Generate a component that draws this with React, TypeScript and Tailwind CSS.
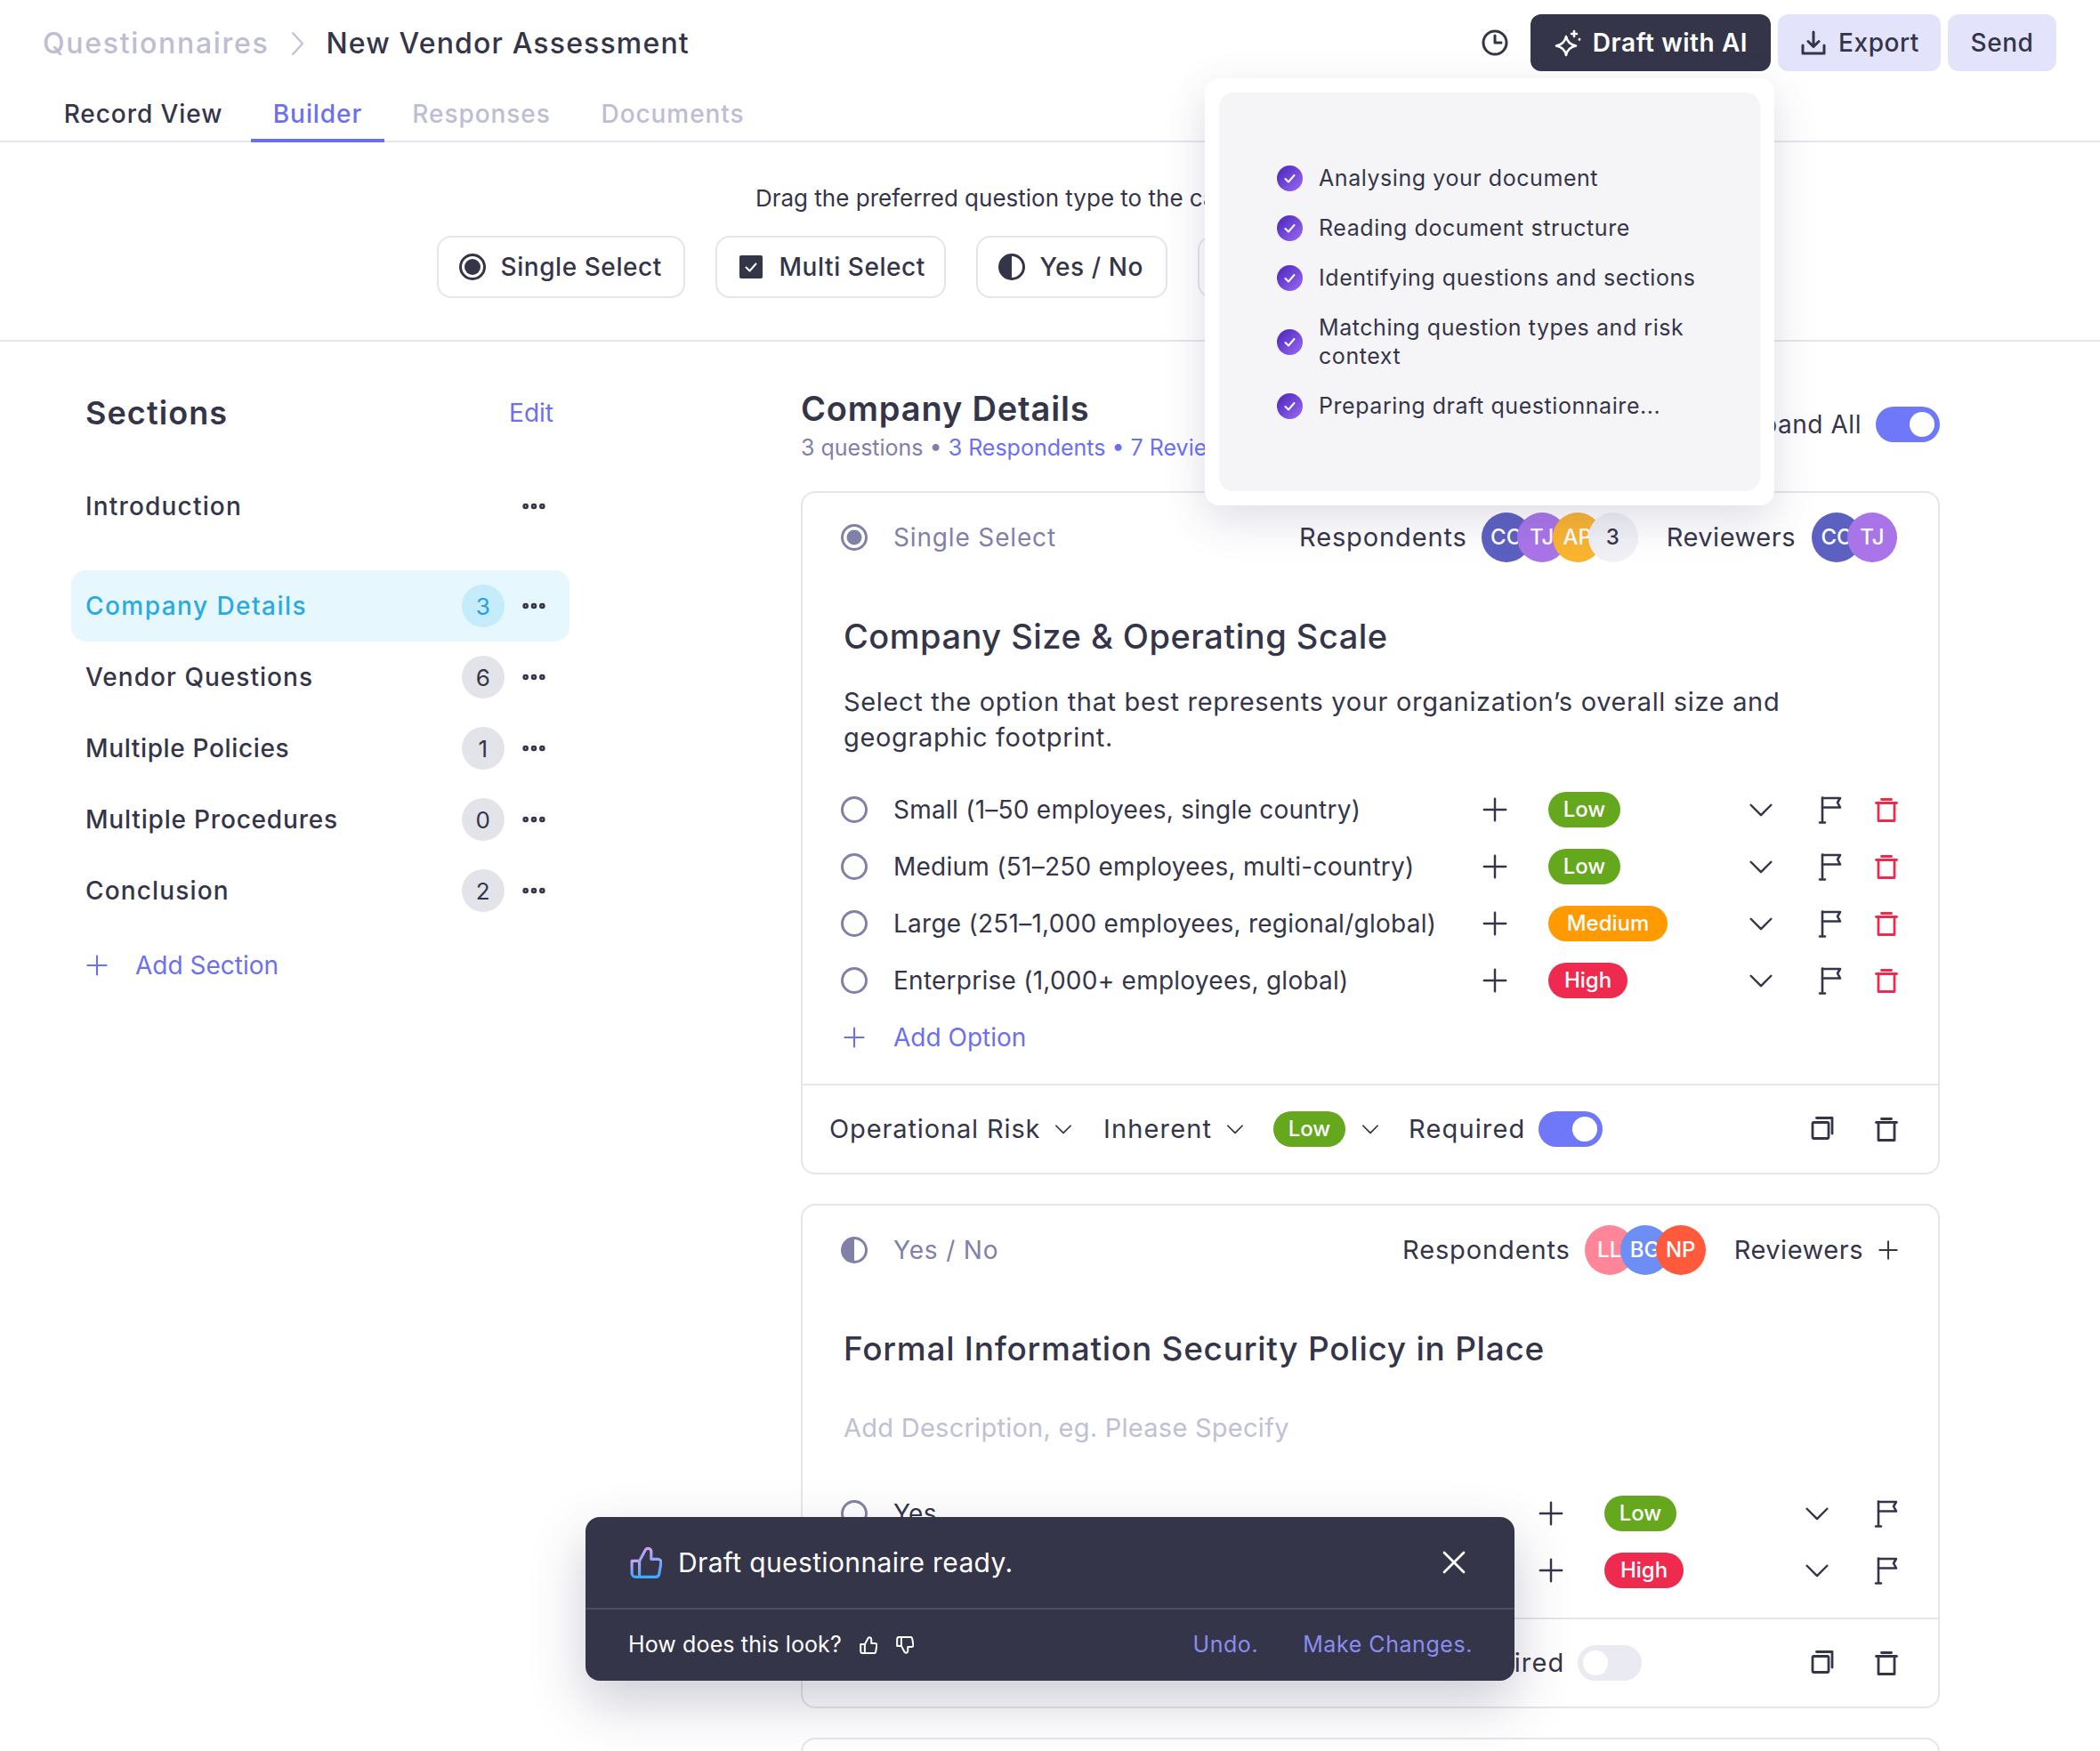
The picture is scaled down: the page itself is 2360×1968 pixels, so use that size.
import { MoreHorizontal } from 'lucide-react';

const ClockIcon = () => (
    <svg width="32" height="32" viewBox="0 0 32 32" fill="none" stroke="#35354a" strokeWidth="3" strokeLinecap="round" strokeLinejoin="round">
        <circle cx="16" cy="16" r="13" />
        <path d="M16 8v8h7" />
    </svg>
);

const SparkleIcon = () => (
    <svg width="32" height="32" viewBox="0 0 32 32" fill="none" stroke="white" strokeWidth="2.6" strokeLinecap="round" strokeLinejoin="round">
        <path d="M14 9c1 5.500 4 9 11 10.500c-7 1.500-10 5-11 10.500c-1-5.500-4-9-11-10.500c7-1.500 10-5 11-10.500z" />
        <path d="M23 3v6M20 6h6" />
        <path d="M29 12v.5" />
    </svg>
);

const DownloadIcon = () => (
    <svg width="32" height="32" viewBox="0 0 32 32" fill="none" stroke="#35354a" strokeWidth="3" strokeLinecap="round" strokeLinejoin="round">
        <path d="M4 19v9h24v-9" />
        <path d="M16 4v16M10 14.500l6 6 6-6" />
    </svg>
);

const FlagIcon = () => (
    <svg width="32" height="32" viewBox="0 0 32 32" fill="none" stroke="#35354a" strokeWidth="2.600" strokeLinecap="round" strokeLinejoin="round">
        <path d="M8 2.500V30M5 30.500h6" />
        <path d="M8 3h20l-3 5 3 5.500H8" />
    </svg>
);

const TrashIcon = ({ color = '#35354a' }: { color?: string }) => (
    <svg width="32" height="32" viewBox="0 0 32 32" fill="none" stroke={color} strokeWidth="2.800" strokeLinecap="round" strokeLinejoin="round">
        <path d="M11.500 4.500h11" />
        <path d="M5.500 8.500h23" />
        <path d="M8 8.500V28.500h18V8.500" />
    </svg>
);

const CopyIcon = () => (
    <svg width="32" height="32" viewBox="0 0 32 32" fill="none" stroke="#35354a" strokeWidth="2.800" strokeLinecap="round" strokeLinejoin="round">
        <rect x="6" y="8.500" width="18" height="18" rx="1.500" />
        <path d="M10.500 3.500H28V21" />
    </svg>
);

const PlusIcon = ({ size = 30, color = '#35354a', className = '' }: { size?: number; color?: string; className?: string }) => (
    <svg width={size} height={size} viewBox="0 0 32 32" fill="none" stroke={color} strokeWidth="2.6" strokeLinecap="round" className={`shrink-0 ${className}`}>
        <path d="M16 3v26M3 16h26" />
    </svg>
);

const CloseIcon = () => (
    <svg width="32" height="32" viewBox="0 0 32 32" fill="none" stroke="white" strokeWidth="2.8" strokeLinecap="round" className="shrink-0">
        <path d="M5 5l22 22M27 5L5 27" />
    </svg>
);

const Chevron = ({ size = 28, className = '' }: { size?: number; className?: string }) => (
    <svg width={size} height={size} viewBox="0 0 32 32" fill="none" stroke="#35354a" strokeWidth="2.8" strokeLinecap="round" strokeLinejoin="round" className={`shrink-0 ${className}`}>
        <path d="M3 10l13 13 13-13" />
    </svg>
);

const ThumbIcon = ({ size, stroke, width = 3, className = '' }: { size: number; stroke: string; width?: number; className?: string }) => (
    <svg width={size} height={size} viewBox="0 0 34 34" fill="none" stroke={stroke} strokeWidth={width} strokeLinecap="round" strokeLinejoin="round" className={className}>
        <defs>
            <linearGradient id="thumbGrad" x1="0" y1="0" x2="0" y2="1">
                <stop offset="0" stopColor="#c9a4f0" />
                <stop offset="1" stopColor="#3fa8ff" />
            </linearGradient>
        </defs>
        <path d="M2 15.500h8v17H6a4 4 0 0 1-4-4z" />
        <path d="M10 15.500 16.500 3.500a3.400 3.400 0 0 1 6 2v8h7a3.400 3.400 0 0 1 3.400 4L31 29a4 4 0 0 1-4 3.500H10" />
    </svg>
);

const RadioOutline = () => <span className="block w-[30px] h-[30px] shrink-0 rounded-full border-[3px] border-[#8180a8]" />;

const CheckBadge = () => (
    <svg width="29" height="29" viewBox="0 0 29 29" className="shrink-0">
        <defs>
            <linearGradient id="checkGrad" x1="0" y1="0" x2="1" y2="1">
                <stop offset="0" stopColor="#4a22b8" />
                <stop offset="1" stopColor="#9a6cf5" />
            </linearGradient>
        </defs>
        <circle cx="14.500" cy="14.500" r="14.500" fill="url(#checkGrad)" />
        <path d="M9.500 15l3.500 3.500 6.500-7.500" fill="none" stroke="white" strokeWidth="2" strokeLinecap="round" strokeLinejoin="round" />
    </svg>
);

const Toggle = ({ on = true }: { on?: boolean }) => (
    <span className={on ? 'flex w-[72px] h-10 rounded-full bg-[#7078fa] items-center justify-end p-1.5 shrink-0' : 'flex w-[72px] h-10 rounded-full bg-[#eaeaf3] items-center justify-start p-1.5 shrink-0'}>
        <span className="block w-7 h-7 rounded-full bg-white" />
    </span>
);

const Pill = ({ level, className = '' }: { level: string; className?: string }) => {
    const tone: Record<string, string> = {
        Low: 'bg-[#65a81e] w-[81px]',
        Medium: 'bg-[#ff9a00] w-[134px]',
        High: 'bg-[#ee2b4e] w-[89px]',
    };
    return (
        <span className={`flex h-10 items-center justify-center rounded-full text-white text-[24px] font-medium tracking-normal ${tone[level]} ${className}`}>
            {level}
        </span>
    );
};

const Avatar = ({ label, color, first }: { label: string; color: string; first?: boolean }) => (
    <span className={first ? 'flex w-14 h-14 items-center justify-center rounded-full text-white text-[24px] font-medium tracking-normal' : 'flex w-14 h-14 -ml-4 items-center justify-center rounded-full text-white text-[24px] font-medium tracking-normal'} style={{ backgroundColor: color }}>
        {label}
    </span>
);

const TypeChip = ({ w, icon, label }: { w: string; icon: React.ReactNode; label: string }) => (
    <div className={`flex h-[70px] items-center gap-[17px] rounded-2xl border-2 border-[#e5e5ec] pl-[23px] text-[28px] font-medium text-[#35354a] ${w}`}>
        {icon}
        {label}
    </div>
);

const SectionRow = ({ name, count, track, active }: { name: string; count: number; track: string; active?: boolean }) => (
    <div className={active ? 'flex h-20 items-center rounded-2xl bg-[#e6f7fe] pl-4 pr-6 text-[#29abe2]' : 'flex h-20 items-center pl-4 pr-6 text-[#35354a]'}>
        <span className={`flex-1 text-[28px] font-medium ${track}`}>{name}</span>
        <span className={active ? 'flex w-12 h-12 items-center justify-center rounded-full bg-[#c5ecfb] text-[#2a9ee0] text-[26px]' : 'flex w-12 h-12 items-center justify-center rounded-full bg-[#e3e3ea] text-[26px]'}>{count}</span>
        <MoreHorizontal className="ml-[17px] text-[#35354a]" size={32} strokeWidth={3} />
    </div>
);

const OptionRow = ({ text, level, trash = true }: { text: string; level: string; trash?: boolean }) => (
    <div className="flex h-16 items-center pl-[43px] pr-[43px] text-[#35354a]">
        <RadioOutline />
        <span className="ml-[29px] flex-1 text-[28px] tracking-[0.009em]">{text}</span>
        <PlusIcon className="mx-px" />
        <div className="ml-11 w-[223px] shrink-0">
            <Pill level={level} />
        </div>
        <Chevron className="mx-0.5" />
        <div className="ml-[45px] shrink-0"><FlagIcon /></div>
        {trash && <div className="ml-[31px] shrink-0"><TrashIcon color="#ee2b4e" /></div>}
    </div>
);

const CardFooter = ({ level, required, labelW, pad = '' }: { level: string; required: boolean; labelW: string; pad?: string }) => (
    <div className={`flex h-[100px] items-center border-t-2 border-[#e5e5ec] pl-[30px] pr-[43px] text-[29px] tracking-[0.04em] text-[#35354a] ${pad}`}>
        <span className={`whitespace-nowrap tracking-[0.03em] ${labelW}`}>Operational Risk</span>
        <Chevron className="ml-[19px]" size={20} />
        <span className="ml-[35px] w-[119px]">Inherent</span>
        <Chevron className="ml-[19px]" size={20} />
        <Pill level={level} className="ml-[33px]" />
        <Chevron className="ml-[18px]" size={20} />
        <span className="ml-[33px] w-[129px]">Required</span>
        <div className="ml-[17px]"><Toggle on={required} /></div>
        <div className="ml-auto"><CopyIcon /></div>
        <div className="ml-10"><TrashIcon /></div>
    </div>
);

const sections = [
    { name: 'Company Details', count: 3, active: true, track: 'tracking-[0.052em]' },
    { name: 'Vendor Questions', count: 6, track: 'tracking-[0.037em]' },
    { name: 'Multiple Policies', count: 1, track: 'tracking-[0.023em]' },
    { name: 'Multiple Procedures', count: 0, track: 'tracking-[0.029em]' },
    { name: 'Conclusion', count: 2, track: 'tracking-[0.041em]' },
];

const steps = [
    'Analysing your document',
    'Reading document structure',
    'Identifying questions and sections',
    'Matching question types and risk context',
    'Preparing draft questionnaire...',
];

export default function App() {
    return (
        <div className="relative h-[1968px] w-[2360px] overflow-hidden bg-white [font-family:Inter,sans-serif] tracking-[0.035em] text-[#35354a]">
            {/* Top bar */}
            <div className="pt-4">
                <div className="flex h-16 items-center justify-between pl-12 pr-[49px]">
                    <div className="flex items-center pt-px text-[32px] font-medium">
                        <span className="tracking-[0.053em] text-[#bdbdd3]">Questionnaires</span>
                        <svg width="32" height="32" viewBox="0 0 32 32" fill="none" stroke="#bdbdd3" strokeWidth="2" strokeLinecap="round" strokeLinejoin="round" className="ml-4">
                            <path d="M11 4l11 12-11 12" />
                        </svg>
                        <span className="ml-[16px] tracking-[0.036em]">New Vendor Assessment</span>
                    </div>
                    <div className="flex items-center">
                        <ClockIcon />
                        <button className="ml-6 flex h-16 w-[270px] items-center justify-center gap-3 rounded-xl bg-[#35354a] text-[28px] font-semibold text-white">
                            <SparkleIcon />
                            Draft with AI
                        </button>
                        <button className="ml-2 flex h-16 w-[183px] items-center justify-center gap-3 rounded-xl bg-[#e3e4fb] text-[28px] font-medium">
                            <DownloadIcon />
                            Export
                        </button>
                        <button className="ml-2 flex h-16 w-[122px] items-center justify-center rounded-xl bg-[#e3e4fb] text-[28px] font-medium">Send</button>
                    </div>
                </div>
            </div>

            {/* Tabs */}
            <div className="mt-4 flex h-16 gap-2 border-b-2 border-[#e5e5ec] pl-12 text-[28px] font-medium tracking-[0.033em]">
                <div className="flex h-16 w-[226px] items-center justify-center border-b-4 border-transparent pt-1">Record View</div>
                <div className="flex h-16 w-[150px] items-center justify-center border-b-4 border-[#6c70f0] pt-1 text-[#6c70f0]">Builder</div>
                <div className="flex h-16 w-[202px] items-center justify-center border-b-4 border-transparent pt-1 text-[#bdbdd3]">Responses</div>
                <div className="flex h-16 w-[212px] items-center justify-center border-b-4 border-transparent pt-1 text-[#bdbdd3]">Documents</div>
            </div>

            {/* Question types */}
            <div className="flex h-[224px] flex-col items-center border-b-2 border-[#e5e5ec] pt-[47px]">
                <p className="text-[26px] leading-8 tracking-normal">Drag the preferred question type to the canvas below.</p>
                <div className="mt-[26px] flex gap-[34px]">
                    <TypeChip
                        w="w-[279px]"
                        label="Single Select"
                        icon={
                            <span className="flex h-[30px] w-[30px] items-center justify-center rounded-full border-[3px] border-[#35354a]">
                                <span className="block h-[18px] w-[18px] rounded-full bg-[#35354a]" />
                            </span>
                        }
                    />
                    <TypeChip
                        w="w-[259px]"
                        label="Multi Select"
                        icon={
                            <svg width="30" height="30" viewBox="0 0 30 30">
                                <rect x="2" y="2" width="26" height="26" rx="2" fill="#35354a" />
                                <path d="M9.500 15.500l4 4 7-8" fill="none" stroke="white" strokeWidth="2" strokeLinecap="round" strokeLinejoin="round" />
                            </svg>
                        }
                    />
                    <TypeChip
                        w="w-[215px]"
                        label="Yes / No"
                        icon={
                            <svg width="30" height="30" viewBox="0 0 30 30">
                                <circle cx="15" cy="15" r="13.500" fill="white" stroke="#35354a" strokeWidth="3" />
                                <path d="M15 1.500a13.500 13.500 0 0 0 0 27z" fill="#35354a" />
                            </svg>
                        }
                    />
                    <TypeChip w="w-[245px]" label="Short Text" icon={null} />
                    <TypeChip w="w-[245px]" label="Long Text" icon={null} />
                </div>
            </div>

            <div className="flex">
                {/* Sections */}
                <aside className="ml-20 w-[560px] shrink-0 pt-[60px]">
                    <div className="flex h-10 items-center justify-between pl-4 pr-[18px]">
                        <h2 className="text-[36px] font-semibold tracking-[0.03em]">Sections</h2>
                        <span className="text-[28px] tracking-normal text-[#6c70f0]">Edit</span>
                    </div>
                    <div className="mt-[45px] flex h-20 items-center justify-between pl-4 pr-6">
                        <span className="text-[28px] font-medium tracking-[0.042em]">Introduction</span>
                        <MoreHorizontal size={32} strokeWidth={3} />
                    </div>
                    <div className="mt-8">
                        {sections.map((s) => (
                            <SectionRow key={s.name} name={s.name} count={s.count} active={s.active} track={s.track} />
                        ))}
                    </div>
                    <div className="mt-3 flex h-16 items-center gap-[30px] pl-[16px] text-[28px] tracking-normal text-[#6c70f0]">
                        <PlusIcon size={26} color="#6c70f0" />
                        Add Section
                    </div>
                </aside>

                {/* Canvas */}
                <main className="ml-[260px] w-[1280px] shrink-0 pt-[53px]">
                    <div className="flex h-[115px] items-start justify-between">
                        <div>
                            <h1 className="text-[38px] font-semibold leading-[44px] tracking-[0.022em]">Company Details</h1>
                            <p className="mt-1 text-[25px] leading-9 tracking-normal text-[#8180a8]">
                                3 questions • <span className="text-[#6c70f0]">3 Respondents • 7 Reviewers</span>
                            </p>
                        </div>
                        <div className="mt-[19px] flex items-center gap-4 text-[28px]">
                            Expand All
                            <Toggle />
                        </div>
                    </div>

                    {/* Question 1 */}
                    <section className="rounded-2xl border-2 border-[#e5e5ec]">
                        <div className="flex h-[100px] items-center pl-[43px] pr-[46px]">
                            <svg width="30" height="30" viewBox="0 0 30 30">
                                <circle cx="15" cy="15" r="13.500" fill="none" stroke="#8180a8" strokeWidth="3" />
                                <circle cx="15" cy="15" r="8.500" fill="#8180a8" />
                            </svg>
                            <span className="ml-[29px] text-[28px] tracking-[0.03em] text-[#8180a8]">Single Select</span>
                            <span className="ml-auto text-[29px] tracking-[0.03em]">Respondents</span>
                            <div className="ml-4 flex">
                                <Avatar first label="CC" color="#5c60c0" />
                                <Avatar label="TJ" color="#a974e8" />
                                <Avatar label="AP" color="#fbb430" />
                                <span className="-ml-4 flex h-14 w-14 items-center justify-center rounded-full bg-[#f0f0f5] text-[24px] font-medium">3</span>
                            </div>
                            <span className="ml-[32px] text-[29px] tracking-[0.018em]">Reviewers</span>
                            <div className="ml-[18px] flex">
                                <Avatar first label="CC" color="#5c60c0" />
                                <Avatar label="TJ" color="#a974e8" />
                            </div>
                        </div>
                        <h3 className="mt-9 pl-[46px] text-[38px] font-medium leading-[50px] tracking-[0.013em]">Company Size &amp; Operating Scale</h3>
                        <p className="mt-[29px] w-[1130px] pl-[46px] text-[29px] leading-10 tracking-[0.023em]">
                            Select the option that best represents your organization’s overall size and geographic footprint.
                        </p>
                        <div className="mt-[29px]">
                            <OptionRow text="Small (1–50 employees, single country)" level="Low" />
                            <OptionRow text="Medium (51–250 employees, multi-country)" level="Low" />
                            <OptionRow text="Large (251–1,000 employees, regional/global)" level="Medium" />
                            <OptionRow text="Enterprise (1,000+ employees, global)" level="High" />
                        </div>
                        <div className="flex h-16 items-center gap-[31px] pl-[45px] text-[28px] tracking-normal text-[#6c70f0]">
                            <PlusIcon size={26} color="#6c70f0" />
                            Add Option
                        </div>
                        <div className="mt-5">
                            <CardFooter level="Low" required labelW="w-[234px]" />
                        </div>
                    </section>

                    {/* Question 2 */}
                    <section className="mt-[33px] rounded-2xl border-2 border-[#e5e5ec]">
                        <div className="flex h-[100px] items-center pl-[43px] pr-[44px]">
                            <svg width="30" height="30" viewBox="0 0 30 30">
                                <circle cx="15" cy="15" r="13.500" fill="none" stroke="#8180a8" strokeWidth="3" />
                                <path d="M15 1.500a13.500 13.500 0 0 0 0 27z" fill="#8180a8" />
                            </svg>
                            <span className="ml-[29px] text-[28px] tracking-[0.03em] text-[#8180a8]">Yes / No</span>
                            <span className="ml-auto text-[29px] tracking-[0.03em]">Respondents</span>
                            <div className="ml-4 flex">
                                <Avatar first label="LL" color="#ff8699" />
                                <Avatar label="BG" color="#6d8ef5" />
                                <Avatar label="NP" color="#ff5a3c" />
                            </div>
                            <span className="ml-8 text-[29px] tracking-[0.018em]">Reviewers</span>
                            <PlusIcon className="ml-4" size={24} />
                        </div>
                        <h3 className="mt-9 pl-[46px] text-[37px] font-medium leading-[50px] tracking-[0.02em]">Formal Information Security Policy in Place</h3>
                        <p className="mt-11 pl-[46px] text-[29px] leading-10 tracking-[0.009em] text-[#c0bfd4]">Add Description, eg. Please Specify</p>
                        <div className="mt-11">
                            <OptionRow text="Yes" level="Low" trash={false} />
                            <OptionRow text="No" level="High" trash={false} />
                        </div>
                        <div className="mt-[21px]">
                            <CardFooter level="Low" required={false} labelW="w-[278px]" pad="pb-[1px]" />
                        </div>
                    </section>

                    <section className="mt-[33px] h-40 rounded-2xl border-2 border-[#e5e5ec]" />
                </main>
            </div>

            {/* AI progress popover */}
            <div className="absolute left-[1354px] top-[88px] h-[480px] w-[640px] rounded-2xl bg-white p-4 shadow-[0_16px_48px_rgba(70,70,120,0.18)]">
                <div className="flex h-full flex-col justify-center gap-6 rounded-2xl bg-[#f5f5f8] pl-[65px]">
                    {steps.map((step) => (
                        <div key={step} className="flex items-center gap-[18px]">
                            <CheckBadge />
                            <span className="w-[440px] text-[25px] leading-8">{step}</span>
                        </div>
                    ))}
                </div>
            </div>

            {/* Toast */}
            <div className="absolute left-[658px] top-[1705px] h-[184px] w-[1044px] rounded-2xl bg-[#353549] text-white shadow-[0_24px_60px_rgba(53,53,90,0.25)]">
                <div className="flex h-[104px] items-center border-b-2 border-[#4d4d66] pl-[50px] pr-[52px]">
                    <ThumbIcon size={36} stroke="url(#thumbGrad)" />
                    <span className="ml-[18px] flex-1 text-[30px] tracking-[0.012em]">Draft questionnaire ready.</span>
                    <CloseIcon />
                </div>
                <div className="flex h-20 items-center pl-12 pr-[47px] text-[25px]">
                    <span className="tracking-[0.005em]">How does this look?</span>
                    <ThumbIcon className="ml-5" size={20} stroke="white" width={3.4} />
                    <ThumbIcon className="ml-[21px] -scale-y-100" size={20} stroke="white" width={3.4} />
                    <span className="ml-auto text-[#8b8cf0]">Undo.</span>
                    <span className="ml-[50px] text-[#8b8cf0]">Make Changes.</span>
                </div>
            </div>
        </div>
    );
}
